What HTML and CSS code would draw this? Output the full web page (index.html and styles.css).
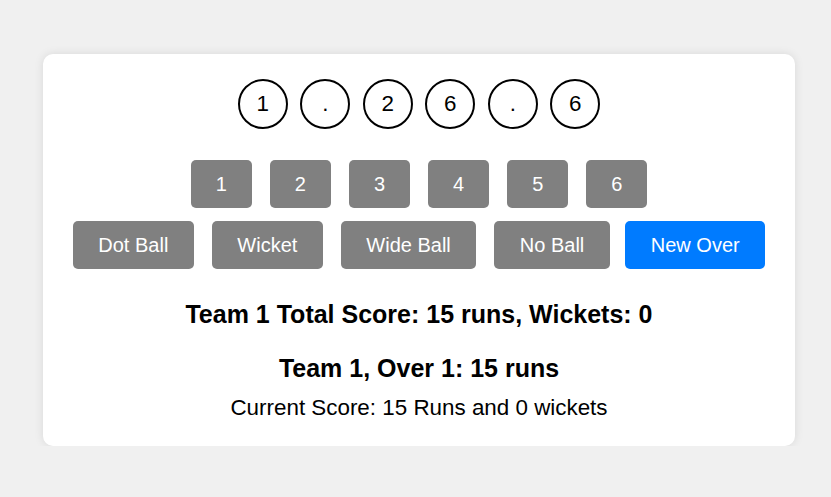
FILE: index.html
```html
<!DOCTYPE html>
<html>
<head>
<meta charset="utf-8">
<link rel="stylesheet" href="styles.css">
</head>
<body>
<div class="card">
  <div class="balls">
    <div class="ball">1</div>
    <div class="ball">.</div>
    <div class="ball">2</div>
    <div class="ball">6</div>
    <div class="ball">.</div>
    <div class="ball">6</div>
  </div>
  <div class="row runs">
    <button class="btn">1</button>
    <button class="btn">2</button>
    <button class="btn">3</button>
    <button class="btn">4</button>
    <button class="btn">5</button>
    <button class="btn">6</button>
  </div>
  <div class="row actions">
    <button class="btn">Dot Ball</button>
    <button class="btn">Wicket</button>
    <button class="btn">Wide Ball</button>
    <button class="btn">No Ball</button>
    <button class="btn primary">New Over</button>
  </div>
  <h2 class="total">Team 1 Total Score: 15 runs, Wickets: 0</h2>
  <h2 class="over">Team 1, Over 1: 15 runs</h2>
  <p class="current">Current Score: 15 Runs and 0 wickets</p>
</div>
</body>
</html>
```

FILE: styles.css
```css
html, body {
  margin: 0;
  padding: 0;
  background: #f0f0f0;
  font-family: "Liberation Sans", Arial, sans-serif;
  color: #000;
}
body {
  padding: 54px 36px 0 43px;
}
.card {
  width: 752px;
  height: 392px;
  box-sizing: border-box;
  background: #fff;
  border-radius: 10px;
  box-shadow: 0 0 10px rgba(0, 0, 0, 0.1);
  padding-top: 25px;
  display: flex;
  flex-direction: column;
  align-items: center;
}
.balls {
  display: flex;
  gap: 12.5px;
}
.ball {
  width: 50px;
  height: 50px;
  box-sizing: border-box;
  border: 2px solid #000;
  border-radius: 50%;
  display: flex;
  align-items: center;
  justify-content: center;
  font-size: 22.4px;
}
.row {
  display: flex;
  gap: 18px;
}
.runs {
  margin-top: 31px;
}
.actions {
  margin-top: 13px;
}
.btn {
  height: 48px;
  padding: 0 25px;
  border: none;
  border-radius: 5px;
  background: #808080;
  color: #fff;
  font-family: "Liberation Sans", Arial, sans-serif;
  font-size: 20px;
}
.actions .btn {
  padding: 0 25.5px;
}
.actions .primary {
  background: #007bff;
  margin-left: -2.5px;
}
.total {
  margin: 31px 0 0;
  font-size: 25px;
  line-height: 28px;
}
.over {
  margin: 26px 0 0;
  font-size: 25px;
  line-height: 28px;
}
.current {
  margin: 13px 0 0;
  font-size: 22.4px;
  line-height: 26px;
}
```
